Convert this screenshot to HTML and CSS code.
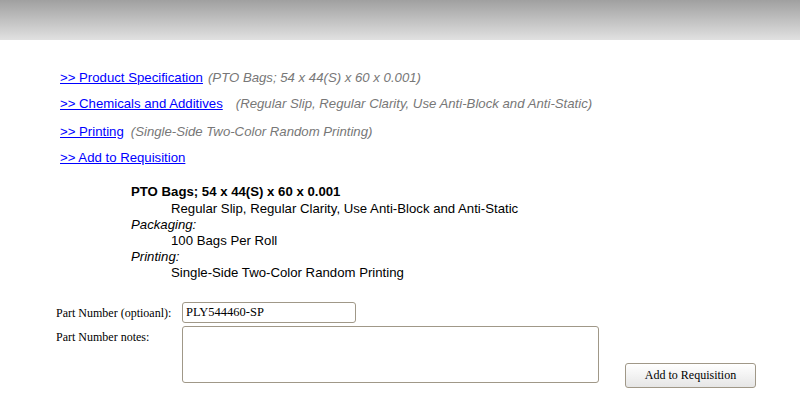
FILE: index.html
```html
<!DOCTYPE html>
<html>
<head>
<meta charset="utf-8">
<link rel="stylesheet" href="styles.css">
</head>
<body>
<div class="header"></div>
<div class="content">
  <div class="links">
    <div class="row r1"><a href="#">&gt;&gt; Product Specification</a><span class="note n1">(PTO Bags; 54 x 44(S) x 60 x 0.001)</span></div>
    <div class="row r2"><a href="#">&gt;&gt; Chemicals and Additives</a><span class="note n2">(Regular Slip, Regular Clarity, Use Anti-Block and Anti-Static)</span></div>
    <div class="row r3"><a href="#">&gt;&gt; Printing</a><span class="note n3">(Single-Side Two-Color Random Printing)</span></div>
    <div class="row r4"><a href="#">&gt;&gt; Add to Requisition</a></div>
  </div>
  <div class="summary">
    <div class="title">PTO Bags; 54 x 44(S) x 60 x 0.001</div>
    <div class="ind">Regular Slip, Regular Clarity, Use Anti-Block and Anti-Static</div>
    <div class="lbl">Packaging:</div>
    <div class="ind">100 Bags Per Roll</div>
    <div class="lbl">Printing:</div>
    <div class="ind">Single-Side Two-Color Random Printing</div>
  </div>
  <form class="form">
    <div class="frow">
      <label class="flabel">Part Number (optioanl):</label>
      <input class="pn" type="text" value="PLY544460-SP">
    </div>
    <div class="frow">
      <label class="flabel">Part Number notes:</label>
      <textarea class="notes"></textarea>
      <button type="button" class="btn">Add to Requisition</button>
    </div>
  </form>
</div>
</body>
</html>
```
FILE: styles.css
```css
html, body { margin: 0; padding: 0; background: #fff; }
body { font-family: "Liberation Sans", Arial, sans-serif; font-size: 13.2px; color: #000; }
.header { height: 40px; background: linear-gradient(#a0a0a0, #e1e1e1); }
.content { padding-top: 29px; }
.links { padding-left: 60px; }
.row { height: 26px; line-height: 18px; }
.r2 { height: 28px; }
.r3 { height: 26px; }
.row a { color: #0000ff; text-decoration: underline; }
.note { color: #777; font-style: italic; }
.n1 { margin-left: 5px; }
.n2 { margin-left: 13px; }
.n3 { margin-left: 7px; }
.summary { padding-left: 131px; padding-top: 9px; line-height: 16px; }
.title { font-weight: bold; margin-bottom: 1px; }
.ind { padding-left: 40px; }
.lbl { font-style: italic; }
.form { margin: 21px 0 0 56px; font-family: "Liberation Serif", "Times New Roman", serif; font-size: 12px; }
.frow { display: flex; align-items: flex-start; }
.flabel { width: 126px; padding-top: 4px; }
.pn { width: 166px; height: 15px; padding: 2px 3px; border: 1px solid #a09888; border-radius: 3px; font-family: "Liberation Serif", serif; font-size: 12.5px; margin: 0 0 3px 0; }
.notes { width: 413px; height: 53px; padding: 1px; border: 1px solid #a09888; border-radius: 3px; resize: none; margin: 0; font-family: "Liberation Serif", serif; }
.btn { margin: 37px 0 0 26px; width: 131px; height: 25px; border: 1px solid #a09888; border-radius: 3px; background: linear-gradient(#ffffff, #e6e6e6); font-family: "Liberation Serif", serif; font-size: 12px; color: #000; padding: 0; }
```
